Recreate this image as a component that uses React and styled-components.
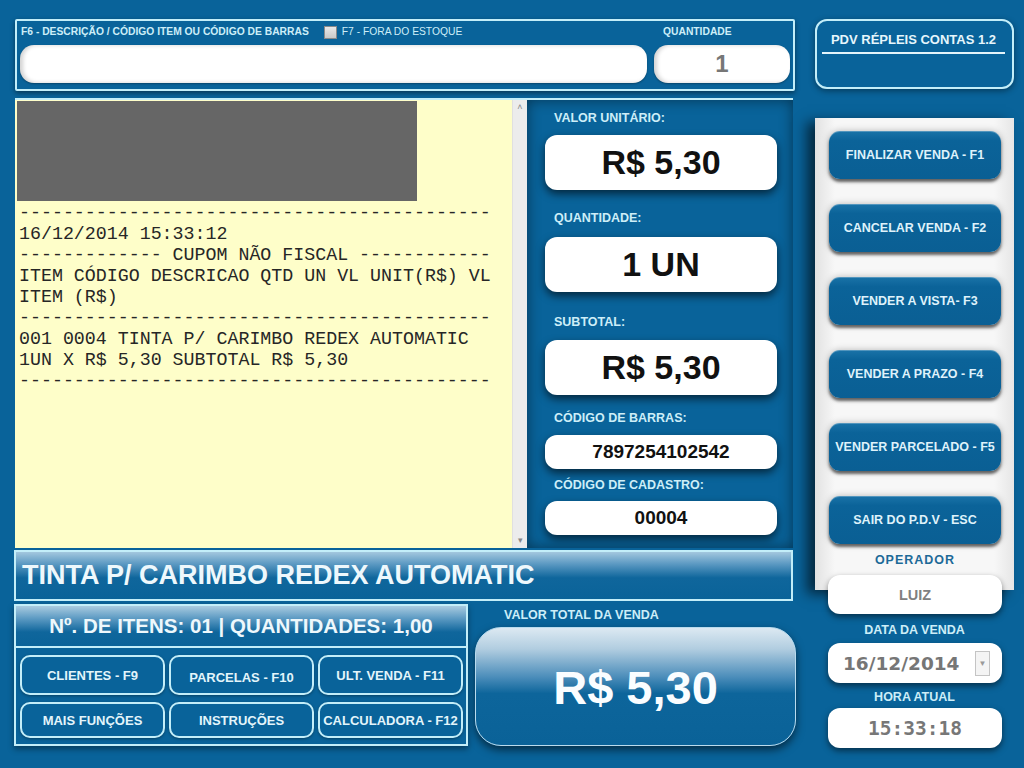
import React from 'react';
import styled, { createGlobalStyle } from 'styled-components';

const LIGHT = '#c3eef9';
const BLUE = '#09639a';
const LABEL = '#cdeef8';

const Global = createGlobalStyle`
  html, body { margin: 0; padding: 0; }
  body {
    width: 1024px; height: 768px; overflow: hidden;
    background: ${BLUE};
    font-family: "Liberation Sans", Arial, sans-serif;
  }
`;

const Page = styled.div`
  width: 1024px; height: 768px; box-sizing: border-box;
  padding: 19px 10px 0 14px;
  display: grid;
  grid-template-columns: 782px 199px;
  column-gap: 19px;
  align-items: start;
  background: ${BLUE};
`;

const LeftCol = styled.div`
  display: flex; flex-direction: column;
`;

const SearchFrame = styled.div`
  margin-left: 1px; width: 780px; height: 72px; box-sizing: border-box;
  border: 2px solid ${LIGHT}; border-radius: 2px;
  padding: 4px 3px 6px 3px;
  display: grid;
  grid-template-columns: 1fr 136px;
  grid-template-rows: 14px 38px;
  column-gap: 7px; row-gap: 6px;
  box-shadow: 0 2px 5px rgba(0,0,0,0.45);
`;

const LabelRow = styled.div`
  display: flex; align-items: center; padding-left: 1px;
  color: ${LABEL}; font-size: 10.3px; line-height: 14px;
`;

const SmallBold = styled.span`
  font-weight: bold;
  padding-left: ${p => p.$pl || 0}px;
`;

const Check = styled.span`
  display: inline-block; width: 11px; height: 11px; margin: 0 5px 0 15px;
  border: 1px solid #8a8a8a; background: linear-gradient(#e8e8e8, #c9c9c9);
`;

const TextInput = styled.div`
  background: #fff; border-radius: 14px;
  box-shadow: inset 3px 0 4px rgba(0,0,0,0.18), 0 1px 2px rgba(0,0,0,0.3);
  display: flex; align-items: center; justify-content: center;
  color: #777; font-weight: bold; font-size: 24px;
`;

const Main = styled.div`
  margin: 7px 0 0 1px; width: 778px; height: 450px; box-sizing: border-box;
  border-top: 2px solid ${LIGHT};
  display: grid; grid-template-columns: 497px 15px 1fr;
`;

const Receipt = styled.div`
  background: #fefec9;
  padding: 1px 0 0 2px;
  overflow: hidden;
`;

const Redacted = styled.div`
  width: 400px; height: 100px; background: #666666;
`;

const Mono = styled.pre`
  margin: 0; padding: 2px 0 0 2px;
  font-family: "Liberation Mono", "Courier New", monospace;
  font-size: 18.3px; line-height: 21px; color: #262626;
`;

const Scroll = styled.div`
  background: #ececec; border-left: 1px solid #e0e0e0;
  display: flex; flex-direction: column; justify-content: space-between;
  align-items: center; color: #888; font-size: 9px; padding: 2px 0 3px;
`;

const InfoPanel = styled.div`
  background: ${BLUE};
  box-shadow: inset 0 0 14px rgba(0,0,0,0.45);
  padding: 10px 16px 0 18px;
  display: flex; flex-direction: column;
`;

const Field = styled.div`
  display: flex; flex-direction: column;
  margin-top: ${p => p.$mt || 0}px;
`;

const FieldLabel = styled.div`
  color: ${LABEL}; font-weight: bold; font-size: 12.5px; line-height: 16px;
  padding-left: 9px; margin-bottom: ${p => p.$mb || 9}px;
`;

const ValueBox = styled.div`
  height: ${p => p.$h}px; background: #fff; border-radius: 12px;
  box-shadow: 0 4px 8px rgba(0,0,0,0.6);
  display: flex; align-items: center; justify-content: center;
  color: #111; font-weight: bold; font-size: ${p => p.$fs}px;
`;

const ProductBar = styled.div`
  margin: 2px 0 0 0; width: 779px; height: 51px; box-sizing: border-box;
  border: 2px solid ${LIGHT};
  background: linear-gradient(to bottom, #a3c7de 0%, #5d9ac3 25%, #0f669c 55%, #0a6399 100%);
  padding-left: 6px;
  display: flex; align-items: center;
  color: #eef8fc; font-weight: bold; font-size: 27px;
`;

const BottomRow = styled.div`
  margin-top: 3px;
  display: grid; grid-template-columns: 454px 321px; column-gap: 7px;
`;

const CountBlock = styled.div`
  height: 142px; box-sizing: border-box;
  border: 2px solid ${LIGHT};
  display: flex; flex-direction: column;
  box-shadow: 0 3px 6px rgba(0,0,0,0.4);
`;

const CountBar = styled.div`
  height: 40px; border-bottom: 2px solid ${LIGHT};
  background: linear-gradient(to bottom, #a9cbe0 0%, #5f9cc4 30%, #0f669c 65%, #0a6399 100%);
  display: flex; align-items: center; justify-content: center;
  color: #eef8fc; font-weight: bold; font-size: 20.5px;
`;

const FnGrid = styled.div`
  flex: 1;
  display: grid; grid-template-columns: repeat(3, 1fr);
  gap: 7px 4px; padding: 7px 3px 6px 4px;
`;

const FnButton = styled.div`
  border: 2px solid ${LIGHT}; border-radius: 10px;
  background: ${BLUE};
  display: flex; align-items: center; justify-content: center;
  color: #e3f5fb; font-weight: bold; font-size: 13px;
  padding-top: ${p => p.$pt || 0}px;
  box-shadow: 0 1px 3px rgba(0,0,0,0.35);
`;

const TotalWrap = styled.div`
  display: flex; flex-direction: column;
`;

const TotalLabel = styled.div`
  margin-top: 4px; padding-left: 29px;
  color: ${LABEL}; font-weight: bold; font-size: 12.5px; line-height: 14px;
`;

const TotalBox = styled.div`
  margin-top: 5px; height: 119px; box-sizing: border-box;
  border: 1px solid #b9dbee; border-radius: 26px;
  background: linear-gradient(to bottom, #dce9f2 0%, #b1cde0 18%, #4b8dba 42%, #0d659b 56%, #0a6298 100%);
  box-shadow: 0 4px 8px rgba(0,0,0,0.55);
  display: flex; align-items: center; justify-content: center;
  color: #fafdff; font-weight: bold; font-size: 47px;
  padding-top: 2px;
`;

const RightCol = styled.div`
  display: flex; flex-direction: column;
`;

const TitleBox = styled.div`
  height: 70px; box-sizing: border-box;
  border: 2px solid ${LIGHT}; border-radius: 12px;
  padding: 10px 7px 0 5px;
  box-shadow: 0 2px 6px rgba(0,0,0,0.4);
`;

const Title = styled.div`
  text-align: center; color: #e6f6fc; font-weight: bold; font-size: 13px;
  line-height: 17px; padding-bottom: 4px;
  border-bottom: 2px solid #e3f4fb;
`;

const ActionPanel = styled.div`
  margin-top: 29px; height: 472px; box-sizing: border-box;
  background: linear-gradient(to right, #e2e2e2 0%, #f7f7f7 10%, #f7f7f7 90%, #e6e6e6 100%);
  padding: 13px 13px 0 14px;
  display: flex; flex-direction: column; gap: 25px;
  box-shadow: -8px 4px 12px rgba(0,0,0,0.6);
`;

const ActionButton = styled.div`
  height: 48px; border-radius: 11px;
  background: linear-gradient(to bottom, #1a73a8 0%, #0b6399 20%, #0a5f94 100%);
  box-shadow: 0 3px 3px rgba(0,0,0,0.55), 0 0 7px rgba(0,0,0,0.25), inset 0 1px 0 rgba(255,255,255,0.25);
  display: flex; align-items: center; justify-content: center;
  color: #dff2fb; font-weight: bold; font-size: 12.5px;
`;

const OperatorLabel = styled.div`
  margin-top: -16px; text-align: center;
  color: #1d6a98; font-weight: bold; font-size: 12.5px; letter-spacing: 1px;
  line-height: 14px;
`;

const InfoBox = styled.div`
  margin: ${p => p.$mt || 0}px 12px 0 13px; height: ${p => p.$h || 40}px;
  background: #fff; border-radius: 12px;
  box-shadow: 0 3px 6px rgba(0,0,0,0.5);
  display: flex; align-items: center;
  justify-content: ${p => p.$left ? 'space-between' : 'center'};
  padding: 0 ${p => p.$left ? '12px 0 15px' : '0'};
  color: #7a7a7a; font-weight: bold;
  position: relative;
`;

const OpName = styled.span`
  font-size: 14.5px; color: #808080;
`;

const DateText = styled.span`
  font-family: "DejaVu Sans", Verdana, sans-serif; font-size: 18.5px; color: #767676;
`;

const TimeText = styled.span`
  font-family: "DejaVu Sans Mono", monospace; font-size: 19.5px; color: #777;
`;

const DropBtn = styled.span`
  width: 15px; height: 25px; box-sizing: border-box;
  border: 1px solid #c4c4c4; background: #f4f4f4;
  display: flex; align-items: center; justify-content: center;
  color: #999; font-size: 8px; font-weight: normal;
`;

const SideLabel = styled.div`
  margin-top: ${p => p.$mt}px; text-align: center;
  color: ${LABEL}; font-weight: bold; font-size: 12.5px; line-height: 14px;
`;

const receipt = [
  '-------------------------------------------',
  '16/12/2014 15:33:12',
  '------------- CUPOM NÃO FISCAL ------------',
  'ITEM CÓDIGO DESCRICAO QTD UN VL UNIT(R$) VL',
  'ITEM (R$)',
  '-------------------------------------------',
  '001 0004 TINTA P/ CARIMBO REDEX AUTOMATIC',
  '1UN X R$ 5,30 SUBTOTAL R$ 5,30',
  '-------------------------------------------',
].join('\n');

const actions = [
  'FINALIZAR VENDA - F1',
  'CANCELAR VENDA - F2',
  'VENDER A VISTA- F3',
  'VENDER A PRAZO - F4',
  'VENDER PARCELADO - F5',
  'SAIR DO P.D.V - ESC',
];

const fns = [
  ['CLIENTES - F9', 0],
  ['PARCELAS - F10', 4],
  ['ULT. VENDA - F11', 0],
  ['MAIS FUNÇÕES', 0],
  ['INSTRUÇÕES', 0],
  ['CALCULADORA - F12', 0],
];

export default function App() {
  return (
    <>
      <Global />
      <Page>
        <LeftCol>
          <SearchFrame>
            <LabelRow>
              <SmallBold>F6 - DESCRIÇÃO / CÓDIGO ITEM OU CÓDIGO DE BARRAS</SmallBold>
              <Check />
              <span>F7 - FORA DO ESTOQUE</span>
            </LabelRow>
            <LabelRow>
              <SmallBold $pl={8}>QUANTIDADE</SmallBold>
            </LabelRow>
            <TextInput />
            <TextInput>1</TextInput>
          </SearchFrame>

          <Main>
            <Receipt>
              <Redacted />
              <Mono>{receipt}</Mono>
            </Receipt>
            <Scroll>
              <span>˄</span>
              <span>▾</span>
            </Scroll>
            <InfoPanel>
              <Field>
                <FieldLabel>VALOR UNITÁRIO:</FieldLabel>
                <ValueBox $h={55} $fs={34}>R$ 5,30</ValueBox>
              </Field>
              <Field $mt={20}>
                <FieldLabel $mb={11}>QUANTIDADE:</FieldLabel>
                <ValueBox $h={55} $fs={34}>1 UN</ValueBox>
              </Field>
              <Field $mt={22}>
                <FieldLabel $mb={10}>SUBTOTAL:</FieldLabel>
                <ValueBox $h={55} $fs={34}>R$ 5,30</ValueBox>
              </Field>
              <Field $mt={15}>
                <FieldLabel $mb={9}>CÓDIGO DE BARRAS:</FieldLabel>
                <ValueBox $h={34} $fs={19}>7897254102542</ValueBox>
              </Field>
              <Field $mt={8}>
                <FieldLabel $mb={8}>CÓDIGO DE CADASTRO:</FieldLabel>
                <ValueBox $h={34} $fs={19}>00004</ValueBox>
              </Field>
            </InfoPanel>
          </Main>

          <ProductBar>TINTA P/ CARIMBO REDEX AUTOMATIC</ProductBar>

          <BottomRow>
            <CountBlock>
              <CountBar>Nº. DE ITENS: 01 | QUANTIDADES: 1,00</CountBar>
              <FnGrid>
                {fns.map(([t, pt]) => (
                  <FnButton key={t} $pt={pt}>{t}</FnButton>
                ))}
              </FnGrid>
            </CountBlock>
            <TotalWrap>
              <TotalLabel>VALOR TOTAL DA VENDA</TotalLabel>
              <TotalBox>R$ 5,30</TotalBox>
            </TotalWrap>
          </BottomRow>
        </LeftCol>

        <RightCol>
          <TitleBox>
            <Title>PDV RÉPLEIS CONTAS 1.2</Title>
          </TitleBox>
          <ActionPanel>
            {actions.map(a => <ActionButton key={a}>{a}</ActionButton>)}
            <OperatorLabel>OPERADOR</OperatorLabel>
          </ActionPanel>
          <InfoBox $mt={-15} $h={39}><OpName>LUIZ</OpName></InfoBox>
          <SideLabel $mt={9}>DATA DA VENDA</SideLabel>
          <InfoBox $mt={6} $h={40} $left>
            <DateText>16/12/2014</DateText>
            <DropBtn>▼</DropBtn>
          </InfoBox>
          <SideLabel $mt={7}>HORA ATUAL</SideLabel>
          <InfoBox $mt={4} $h={40}><TimeText>15:33:18</TimeText></InfoBox>
        </RightCol>
      </Page>
    </>
  );
}
